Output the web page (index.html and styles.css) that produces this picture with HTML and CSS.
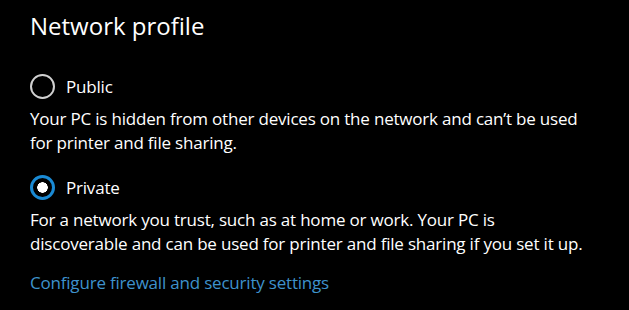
FILE: index.html
```html
<!DOCTYPE html>
<html lang="en">
<head>
    <meta charset="UTF-8">
    <meta name="viewport" content="width=device-width, initial-scale=1.0">
    <title>Network profile</title>
    <link rel="stylesheet" href="styles.css">
</head>
<body>
    <h2 class="title">Network profile</h2>
    <div class="option">
        <label class="radio-row">
            <span class="radio"></span>
            <span class="label">Public</span>
        </label>
        <p class="desc">Your PC is hidden from other devices on the network and can’t be used for printer and file sharing.</p>
    </div>
    <div class="option">
        <label class="radio-row">
            <span class="radio checked"></span>
            <span class="label">Private</span>
        </label>
        <p class="desc">For a network you trust, such as at home or work. Your PC is discoverable and can be used for printer and file sharing if you set it up.</p>
    </div>
    <a class="link" href="#">Configure firewall and security settings</a>
</body>
</html>
```

FILE: styles.css
```css
body {
    margin: 0;
    padding: 8px 30px 0 30px;
    background-color: #000;
    color: #fff;
    font-family: "Open Sans", "Noto Sans", sans-serif;
}
.title {
    margin: 0;
    font-size: 24px;
    font-weight: 400;
    line-height: 36px;
}
.option {
    margin-top: 29px;
}
.option + .option {
    margin-top: 19px;
}
.radio-row {
    display: flex;
    align-items: center;
    gap: 11px;
    height: 26px;
}
.radio {
    width: 21px;
    height: 21px;
    border: 2px solid #d0d0d0;
    border-radius: 50%;
    box-sizing: content-box;
}
.radio.checked {
    width: 19px;
    height: 19px;
    border: 3px solid #1a8ad4;
    background: radial-gradient(circle, #fff 0 5px, #000 5.5px);
}
.label {
    font-size: 17px;
    letter-spacing: -0.2px;
}
.desc {
    margin: 8px 0 0 0;
    width: 560px;
    font-size: 17px;
    letter-spacing: -0.2px;
    line-height: 24px;
}
.link {
    display: inline-block;
    margin-top: 15px;
    font-size: 17px;
    letter-spacing: -0.2px;
    line-height: 24px;
    color: #3e92cc;
    text-decoration: none;
}
```
